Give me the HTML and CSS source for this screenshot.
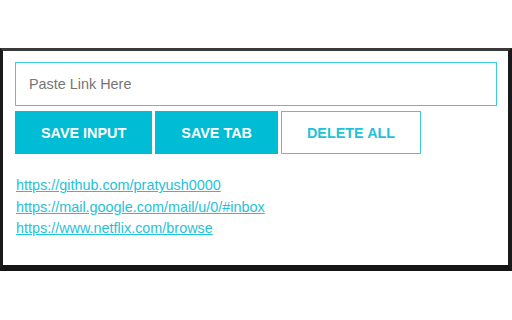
FILE: index.html
```html
<!DOCTYPE html>
<html>
	<head>
		<meta charset="UTF-8">
		<title>Link Saver</title>
		<link rel="stylesheet" href="styles.css">
	</head>
	<body>
		<div class="popup">
			<input type="text" class="link-input" placeholder="Paste Link Here">
			<div class="btns">
				<button class="btn solid">SAVE INPUT</button>
				<button class="btn solid">SAVE TAB</button>
				<button class="btn outline">DELETE ALL</button>
			</div>
			<ul class="links">
				<li><a href="#">https://github.com/pratyush0000</a></li>
				<li><a href="#">https://mail.google.com/mail/u/0/#inbox</a></li>
				<li><a href="#">https://www.netflix.com/browse</a></li>
			</ul>
		</div>
	</body>
</html>
```

FILE: styles.css
```css
body {
	margin: 0;
	padding-top: 48px;
	background-color: #fff;
	font-family: "Liberation Sans", Arial, sans-serif;
	font-size: 14.4px;
}

.popup {
	background-color: #fff;
	border-top: 3px solid #3a3a3a;
	border-left: 3px solid #1a1a1a;
	border-right: 4px solid #1a1a1a;
	border-bottom: 6px solid #151515;
	padding: 11px 11px 0 12px;
	box-sizing: border-box;
	height: 223px;
}

.link-input {
	display: block;
	width: 100%;
	height: 44px;
	box-sizing: border-box;
	border: 1px solid #3ccbdf;
	padding: 0 13px;
	margin: 0;
	font-family: "Liberation Sans", Arial, sans-serif;
	font-size: 14.4px;
	color: #333;
	outline: none;
}

.link-input::placeholder {
	color: #757575;
}

.btns {
	margin-top: 5px;
	display: flex;
	gap: 3px;
}

.btn {
	height: 43px;
	padding: 0 25px;
	border: 1px solid #00bcd4;
	font-family: "Liberation Sans", Arial, sans-serif;
	font-size: 14.4px;
	font-weight: bold;
	cursor: pointer;
}

.btn.solid {
	background-color: #00bcd4;
	color: #fff;
}

.btn.outline {
	background-color: #fff;
	color: #1fc2d8;
	border-color: #3ccbdf;
}

.links {
	list-style: none;
	margin: 21px 0 0 1px;
	padding: 0;
}

.links li {
	line-height: 21.5px;
}

.links a {
	color: #1fc2d8;
	text-decoration: underline;
}
```
